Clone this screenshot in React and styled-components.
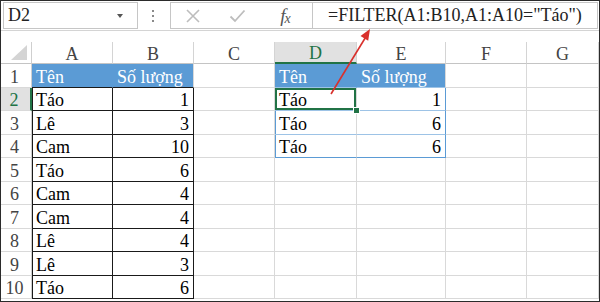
import React from 'react';
import styled, { createGlobalStyle, css } from 'styled-components';

const GlobalStyle = createGlobalStyle`
  html, body {
    margin: 0;
    padding: 0;
    background: #fff;
  }
  body {
    font-family: "Liberation Serif", "Times New Roman", serif;
  }
`;

const GRID = '#d9d9d9';
const BLUE = '#5b9bd5';
const LIGHT_BLUE = '#9dc3e6';
const GREEN = '#217346';

const Frame = styled.div`
  position: relative;
  width: 600px;
  height: 302px;
  box-sizing: border-box;
  border: 1px solid #2b2b2b;
  background: #fff;
  overflow: hidden;
  display: flex;
  flex-direction: column;
`;

const Toolbar = styled.div`
  display: flex;
  align-items: flex-start;
  height: 30px;
  box-sizing: border-box;
  padding: 1px 1px 0 2px;
  border-bottom: 1px solid #d4d4d4;
  margin-bottom: 11px;
`;

const NameBox = styled.div`
  display: flex;
  align-items: center;
  justify-content: space-between;
  width: 135px;
  height: 27px;
  box-sizing: border-box;
  border: 1px solid #c6c6c6;
  padding: 0 14px 0 4px;
  font-size: 18px;
  color: #222;
`;

const Caret = styled.span`
  width: 0;
  height: 0;
  border-left: 3px solid transparent;
  border-right: 3px solid transparent;
  border-top: 4px solid #555;
`;

const Dots = styled.div`
  width: 32px;
  height: 27px;
  display: flex;
  flex-direction: column;
  align-items: center;
  justify-content: center;
  gap: 3px;
  padding-right: 3px;
  box-sizing: border-box;

  span {
    width: 2px;
    height: 2px;
    background: #8a8a8a;
  }
`;

const FxGroup = styled.div`
  display: flex;
  align-items: center;
  width: 142px;
  height: 27px;
  box-sizing: border-box;
  border: 1px solid #c6c6c6;
  border-right: none;
`;

const FxSlot = styled.div`
  width: ${(p) => p.$w}px;
  display: flex;
  justify-content: center;
  align-items: center;
  color: #bdbdbd;
`;

const FxLabel = styled.span`
  font-style: italic;
  font-size: 19px;
  color: #555;
  letter-spacing: -1px;

  sub {
    font-size: 14px;
    vertical-align: -1px;
  }
`;

const FormulaBox = styled.div`
  flex: 1;
  height: 27px;
  box-sizing: border-box;
  border: 1px solid #c6c6c6;
  display: flex;
  align-items: center;
  padding-left: 15px;
  font-size: 18px;
  color: #222;
  white-space: nowrap;
`;

const Sheet = styled.div`
  display: grid;
  grid-template-columns: 31px 81px 81px 81px 82px 89px 81px 1fr;
  grid-template-rows: 22px repeat(10, 23.5px);
`;

const Corner = styled.div`
  display: flex;
  align-items: flex-end;
  justify-content: flex-end;
  padding: 0 4px 3px 0;
  border-right: 1px solid #cfcfcf;
  border-bottom: 1px solid #c4c4c4;

  &::after {
    content: '';
    width: 0;
    height: 0;
    border-left: 16px solid transparent;
    border-bottom: 15px solid #d4d4d4;
  }
`;

const ColHead = styled.div`
  display: flex;
  align-items: flex-end;
  justify-content: center;
  font-size: 18px;
  line-height: 18px;
  color: #444;
  border-right: 1px solid #d4d4d4;
  border-bottom: 1px solid #c4c4c4;
  ${(p) =>
    p.$selected &&
    css`
      background: #e1e1e1;
      color: ${GREEN};
      border-bottom: 2px solid ${GREEN};
    `}
`;

const RowHead = styled.div`
  display: flex;
  align-items: flex-end;
  justify-content: center;
  padding-right: 3px;
  font-size: 18px;
  line-height: 20px;
  color: #444;
  border-right: 1px solid #cfcfcf;
  border-bottom: 1px solid #d9d9d9;
  ${(p) =>
    p.$selected &&
    css`
      background: #e1e1e1;
      color: ${GREEN};
      border-right: 2px solid ${GREEN};
    `}
`;

const variants = {
  blank: css`
    border-right: 1px solid ${GRID};
    border-bottom: 1px solid ${GRID};
  `,
  head: css`
    background: ${BLUE};
    color: #fff;
    border-right: 1px solid ${(p) => (p.$end ? GRID : BLUE)};
    border-bottom: 1px solid ${(p) => (p.$table ? LIGHT_BLUE : '#1a1a1a')};
  `,
  data: css`
    border-right: 1px solid #1a1a1a;
    border-bottom: 1px solid #1a1a1a;
    box-shadow: ${(p) => (p.$edge ? 'inset 1px 0 0 #1a1a1a' : 'none')};
  `,
  table: css`
    border-right: 1px solid ${(p) => (p.$end ? BLUE : GRID)};
    border-bottom: 1px solid ${(p) => (p.$last ? BLUE : LIGHT_BLUE)};
    box-shadow: ${(p) => (p.$edge ? `inset 1px 0 0 ${BLUE}` : 'none')};
  `,
};

const Cell = styled.div`
  position: relative;
  display: flex;
  align-items: flex-end;
  justify-content: ${(p) => (p.$num ? 'flex-end' : 'flex-start')};
  padding: 0 4px;
  font-size: 18px;
  line-height: 20px;
  color: #000;
  white-space: nowrap;
  ${(p) => variants[p.$variant || 'blank']}
  ${(p) =>
    p.$active &&
    css`
      box-shadow: inset 0 0 0 2px ${GREEN};
      &::after {
        content: '';
        position: absolute;
        right: -4px;
        bottom: -4px;
        width: 5px;
        height: 5px;
        background: ${GREEN};
        border: 1px solid #fff;
        z-index: 2;
      }
    `}
`;

const Arrow = styled.svg`
  position: absolute;
  left: 0;
  top: 0;
  pointer-events: none;
  z-index: 3;
`;

const columns = ['A', 'B', 'C', 'D', 'E', 'F', 'G'];

const source = [
  ['Táo', 1],
  ['Lê', 3],
  ['Cam', 10],
  ['Táo', 6],
  ['Cam', 4],
  ['Cam', 4],
  ['Lê', 4],
  ['Lê', 3],
  ['Táo', 6],
];

const filtered = [
  ['Táo', 1],
  ['Táo', 6],
  ['Táo', 6],
];

function renderRow(r) {
  const cells = [];
  if (r === 1) {
    cells.push(<Cell key="a" $variant="head">Tên</Cell>);
    cells.push(<Cell key="b" $variant="head" $end>Số lượng</Cell>);
    cells.push(<Cell key="c" />);
    cells.push(<Cell key="d" $variant="head" $table>Tên</Cell>);
    cells.push(<Cell key="e" $variant="head" $table $end>Số lượng</Cell>);
  } else {
    const [name, qty] = source[r - 2];
    cells.push(<Cell key="a" $variant="data" $edge>{name}</Cell>);
    cells.push(<Cell key="b" $variant="data" $num>{qty}</Cell>);
    cells.push(<Cell key="c" />);
    const row = filtered[r - 2];
    if (row) {
      const last = r - 2 === filtered.length - 1;
      cells.push(
        <Cell key="d" $variant="table" $edge $last={last} $active={r === 2}>
          {row[0]}
        </Cell>
      );
      cells.push(
        <Cell key="e" $variant="table" $end $last={last} $num>
          {row[1]}
        </Cell>
      );
    } else {
      cells.push(<Cell key="d" />);
      cells.push(<Cell key="e" />);
    }
  }
  cells.push(<Cell key="f" />);
  cells.push(<Cell key="g" />);
  return cells;
}

function XIcon() {
  return (
    <svg width="16" height="16" viewBox="0 0 16 16">
      <path d="M2 2 L14 14 M14 2 L2 14" stroke="currentColor" strokeWidth="1.6" fill="none" />
    </svg>
  );
}

function CheckIcon() {
  return (
    <svg width="17" height="16" viewBox="0 0 17 16">
      <path d="M1.5 8.5 L6 13 L15.5 2.5" stroke="currentColor" strokeWidth="1.8" fill="none" />
    </svg>
  );
}

export default function App() {
  const rows = Array.from({ length: 10 }, (_, i) => i + 1);
  return (
    <>
      <GlobalStyle />
      <Frame>
        <Toolbar>
          <NameBox>
            D2
            <Caret />
          </NameBox>
          <Dots>
            <span />
            <span />
            <span />
          </Dots>
          <FxGroup>
            <FxSlot $w={44}>
              <XIcon />
            </FxSlot>
            <FxSlot $w={44}>
              <CheckIcon />
            </FxSlot>
            <FxSlot $w={52}>
              <FxLabel>
                f<sub>x</sub>
              </FxLabel>
            </FxSlot>
          </FxGroup>
          <FormulaBox>=FILTER(A1:B10,A1:A10="Táo")</FormulaBox>
        </Toolbar>
        <Sheet>
          <Corner />
          {columns.map((c) => (
            <ColHead key={c} $selected={c === 'D'}>
              {c}
            </ColHead>
          ))}
          {rows.map((r) => (
            <React.Fragment key={r}>
              <RowHead $selected={r === 2}>{r}</RowHead>
              {renderRow(r)}
            </React.Fragment>
          ))}
        </Sheet>
        <Arrow width="600" height="302" viewBox="0 0 600 302">
          <line x1="330" y1="93" x2="366" y2="34" stroke="#d9302c" strokeWidth="1.6" />
          <polygon points="369,28 367.2,39.7 359.5,35.1" fill="#d9302c" />
        </Arrow>
      </Frame>
    </>
  );
}
